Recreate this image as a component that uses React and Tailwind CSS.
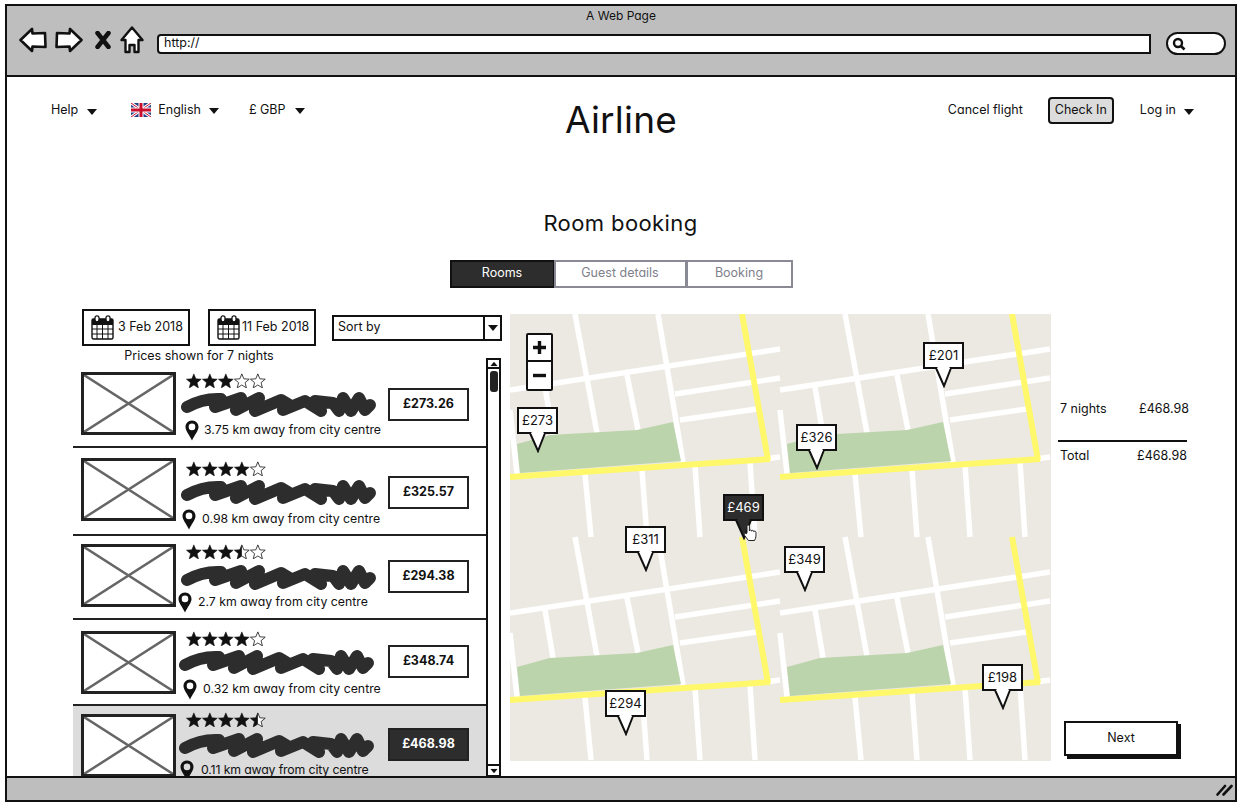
import React from "react";

const Caret = ({ c = "" }) => (
  <svg width="10" height="6" viewBox="0 0 10 6" className={c}><path d="M0 0 L10 0 L5 6 Z" fill="#111" /></svg>
);

const Flag = () => (
  <svg width="20" height="14" viewBox="0 0 20 14" className="block">
    <rect width="20" height="14" fill="#27408b" />
    <path d="M0 0 L20 14 M20 0 L0 14" stroke="#fff" strokeWidth="3" />
    <path d="M0 0 L20 14 M20 0 L0 14" stroke="#c8102e" strokeWidth="1" />
    <path d="M10 0 V14 M0 7 H20" stroke="#fff" strokeWidth="5" />
    <path d="M10 0 V14 M0 7 H20" stroke="#c8102e" strokeWidth="3" />
  </svg>
);

const Back = ({ flip }) => (
  <svg width="28" height="26" viewBox="0 0 28 26" className={flip ? "block -scale-x-100" : "block"}>
    <path d="M1.5 13 L13 2 L13.5 6.5 L26 6 L26.5 20 L13.5 19.5 L13 24 Z" fill="#fff" stroke="#111" strokeWidth="2.6" strokeLinejoin="round" />
  </svg>
);

const Home = () => (
  <svg width="24" height="28" viewBox="0 0 24 28" className="block">
    <path d="M12 1.5 L22.5 14 L18.5 14 L18.5 26 L14.5 26 L14.5 19 L9.5 19 L9.5 26 L5.5 26 L5.5 14 L1.5 14 Z" fill="#fff" stroke="#111" strokeWidth="2.4" strokeLinejoin="round" />
  </svg>
);

const Calendar = () => (
  <svg width="23" height="25" viewBox="0 0 23 25" className="block shrink-0">
    <rect x="1" y="4" width="21" height="20" rx="1.5" fill="#fff" stroke="#111" strokeWidth="1.4" />
    <rect x="1" y="4" width="21" height="6" fill="#111" />
    <path d="M1 14 H22 M1 19 H22 M6 10 V24 M11.5 10 V24 M17 10 V24" stroke="#111" strokeWidth="1" />
    <rect x="4" y="0.8" width="4" height="6" rx="2" fill="#fff" stroke="#111" strokeWidth="1.3" />
    <rect x="15" y="0.8" width="4" height="6" rx="2" fill="#fff" stroke="#111" strokeWidth="1.3" />
  </svg>
);

const StarPath = "M7 0.8 L8.8 5.2 L13.6 5.5 L9.9 8.6 L11.1 13.3 L7 10.7 L2.9 13.3 L4.1 8.6 L0.4 5.5 L5.2 5.2 Z";
const Stars = ({ full, half }) => (
  <svg width="82" height="15" viewBox="0 0 82 15" className="block">
    {[0, 1, 2, 3, 4].map((i) => (
      <g key={i} transform={`translate(${i * 16},0) scale(1.12)`}>
        <path d={StarPath} fill={i < full ? "#111" : "#fff"} stroke="#111" strokeWidth={i < full ? 0.5 : 0.7} strokeLinejoin="round" />
        {half && i === full ? <path d="M7 0.8 L5.2 5.2 L0.4 5.5 L4.1 8.6 L2.9 13.3 L7 10.7 Z" fill="#111" /> : null}
      </g>
    ))}
  </svg>
);

const Scribble = () => (
  <svg width="196" height="26" viewBox="0 0 196 26" className="block">
    <path
      d="M6 16 Q22 7 40 8 L34 16 L60 7 L55 19 L78 7 L74 20 L100 9 L110 15 L102 19 L124 10 L140 20 L134 10 L152 12 L158 20 L162 7 L170 20 L178 7 L184 19 L189 14"
      fill="none" stroke="#2d2d2d" strokeWidth="12" strokeLinecap="round" strokeLinejoin="round"
    />
  </svg>
);

const MapPin = () => (
  <svg width="14" height="21" viewBox="0 0 14 21" className="block shrink-0">
    <path d="M7 0.5 C3 0.5 0.5 3.5 0.5 7 C0.5 11 4.5 15 7 20.5 C9.5 15 13.5 11 13.5 7 C13.5 3.5 11 0.5 7 0.5 Z M7 3.6 A3.3 3.3 0 1 1 7 10.2 A3.3 3.3 0 1 1 7 3.6 Z" fill="#111" fillRule="evenodd" />
  </svg>
);

const rows = [
  { price: "£273.26", dist: "3.75 km away from city centre", full: 3, half: false, row: "h-[82px]", img: "mt-[6px]", mid: "ml-[5px] pt-[7px]", star: "ml-[5px]", sc: "mt-[3px]", line: "mt-[3px] ml-[4px] gap-[5px]", box: "mt-[22px] ml-[10px]" },
  { price: "£325.57", dist: "0.98 km away from city centre", full: 4, half: false, row: "h-[88px]", img: "mt-[10px]", mid: "ml-[5px] pt-[13px]", star: "ml-[5px]", sc: "mt-[3px]", line: "mt-[4px] ml-[1px] gap-[6px]", box: "mt-[28px] ml-[10px]" },
  { price: "£294.38", dist: "2.7 km away from city centre", full: 3, half: true, row: "h-[84px]", img: "mt-[8px]", mid: "ml-[5px] pt-[8px]", star: "ml-[5px]", sc: "mt-[5px]", line: "mt-[2px] -ml-[3px] gap-[6px]", box: "mt-[24px] ml-[10px]" },
  { price: "£348.74", dist: "0.32 km away from city centre", full: 4, half: false, row: "h-[86px]", img: "mt-[11px]", mid: "ml-[3px] pt-[11px]", star: "ml-[7px]", sc: "mt-[3px]", line: "mt-[4px] ml-[4px] gap-[6px]", box: "mt-[25px] ml-[12px]" },
  { price: "£468.98", dist: "0.11 km away from city centre", full: 4, half: true, row: "h-[80px] bg-[#dcdcdc]", img: "mt-[8px]", mid: "ml-[3px] pt-[6px]", star: "ml-[7px]", sc: "mt-[5px]", line: "mt-[2px] ml-[1px] gap-[7px] tracking-[-0.15px]", box: "mt-[22px] ml-[12px] bg-[#2d2d2d] text-white" },
];

const Tile = ({ x, y }) => (
  <g transform={`translate(${x},${y})`}>
    <g stroke="#fff" strokeWidth="5.5" fill="none">
      <path d="M65 0 L87 119" />
      <path d="M148 0 L173 148" />
      <path d="M0 76 L270 35" />
      <path d="M165 80 L270 64" />
      <path d="M170 106 L247 95" />
      <path d="M117 61 L128 116" />
      <path d="M35 73 L43 121" />
      <path d="M0 96 L7 160" />
      <path d="M75 160 L81 223" />
      <path d="M132 156 L137 223" />
      <path d="M185 151 L190 223" />
      <path d="M240 148 L245 223" />
      <path d="M255 145 L270 143" />
    </g>
    <path d="M7 130 L40 121 L127 116 L163 108 L171 147 L10 159 Z" fill="#bcd4ab" />
    <path d="M0 163 L260 145 M232 0 L258 146" stroke="#fff86a" strokeWidth="6" fill="none" />
  </g>
);

const pins = [
  { t: "£273", c: "left-[7px] top-[93px]" },
  { t: "£201", c: "left-[413px] top-[28px]" },
  { t: "£326", c: "left-[286px] top-[110px]" },
  { t: "£311", c: "left-[115px] top-[212px]" },
  { t: "£349", c: "left-[274px] top-[232px]" },
  { t: "£294", c: "left-[95px] top-[376px]" },
  { t: "£198", c: "left-[472px] top-[350px]" },
];

const PricePin = ({ t, c, dark }) => (
  <div className={`absolute w-[41px] ${c}`}>
    <div className={`h-[27px] flex items-center justify-center border-2 border-[#111] text-[13px] ${dark ? "bg-[#2d2d2d] text-white" : "bg-white text-[#111]"}`}>{t}</div>
    <svg width="41" height="21" viewBox="0 0 41 21" className="block -mt-[2px]">
      <path d="M13 1 L21 19 L28 1" fill={dark ? "#2d2d2d" : "#fff"} stroke="#111" strokeWidth="2" />
      <path d="M14.5 0 H26.5 V2 H14.5 Z" fill={dark ? "#2d2d2d" : "#fff"} />
    </svg>
  </div>
);

export default function App() {
  return (
    <div className="w-[1242px] h-[809px] bg-white overflow-hidden pt-[4px] pl-[5px] text-[12.5px] text-[#111] [font-family:Inter,'Liberation_Sans',sans-serif] [font-feature-settings:'cv11']">
      <div className="w-[1232px] h-[798px] border-2 border-[#111] flex flex-col">
        <div className="h-[71px] shrink-0 bg-[#bebebe] border-b-2 border-[#111]">
          <div className="h-[20px] flex items-center justify-center text-[12px]">A Web Page</div>
          <div className="flex items-center h-[28px] pl-[12px]">
            <Back />
            <div className="ml-[8px]"><Back flip /></div>
            <svg width="16" height="18" viewBox="0 0 16 18" className="ml-[12px] block">
              <path d="M2.5 2 L13.5 16 M13.5 2 L2.5 16" stroke="#111" strokeWidth="4.5" strokeLinecap="round" />
            </svg>
            <div className="ml-[9px]"><Home /></div>
            <div className="ml-[13px] mt-[7px] w-[994px] h-[20px] bg-white border-2 border-[#111] rounded-l-[4px] flex items-center pl-[5px] text-[12.5px] leading-none">http://</div>
            <div className="ml-[15px] mt-[7px] w-[60px] h-[23px] bg-white border-2 border-[#111] rounded-full flex items-center pl-[4px]">
              <svg width="14" height="14" viewBox="0 0 14 14" className="block">
                <circle cx="6" cy="6" r="4" fill="#fff" stroke="#111" strokeWidth="2.4" />
                <path d="M9 9 L12.5 12.5" stroke="#111" strokeWidth="2.6" />
              </svg>
            </div>
          </div>
        </div>

        <main className="h-[699px] shrink-0 overflow-hidden">
          <header className="grid grid-cols-[1fr_auto_1fr] h-[130px]">
            <div className="flex items-start pt-[23px] pl-[44px]">
              <div className="flex items-center h-[20px]">Help<Caret c="ml-[9px] mt-[3px]" /></div>
              <div className="flex items-center h-[20px] ml-[34px]"><Flag /><span className="ml-[7px]">English</span><Caret c="ml-[8px] mt-[1px]" /></div>
              <div className="flex items-center h-[20px] ml-[30px]">£ GBP<Caret c="ml-[9px] mt-[1px]" /></div>
            </div>
            <div className="text-[37px] leading-[46px] pt-[20px] font-normal tracking-[0.2px]">Airline</div>
            <div className="flex items-start justify-end pt-[20px] pr-[41px]">
              <div className="h-[27px] flex items-center">Cancel flight</div>
              <div className="ml-[25px] w-[66px] h-[27px] flex items-center justify-center bg-[#dcdcdc] border-2 border-[#111] rounded-[4px]">Check In</div>
              <div className="ml-[26px] h-[27px] flex items-center">Log in<Caret c="ml-[8px] mt-[2px]" /></div>
            </div>
          </header>

          <h1 className="text-center text-[22px] leading-[32px] font-normal tracking-[0.4px] -ml-[1px]">Room booking</h1>

          <div className="flex justify-center mt-[21px] h-[28px] text-[12.5px]">
            <div className="w-[105px] pb-[2px] flex items-center justify-center bg-[#2d2d2d] text-white border-2 border-[#111]">Rooms</div>
            <div className="w-[133px] pb-[2px] flex items-center justify-center bg-white text-[#80808a] border-2 border-[#8a8a94] -ml-[1px]">Guest details</div>
            <div className="w-[107px] pb-[2px] flex items-center justify-center bg-white text-[#80808a] border-2 border-[#8a8a94] -ml-[1px]">Booking</div>
          </div>

          <div className="flex pl-[66px] mt-[21px]">
            <div className="w-[429px] shrink-0">
              <div className="flex items-start h-[37px] pl-[9px]">
                <div className="w-[108px] h-[37px] border-2 border-[#111] flex items-center pl-[7px] gap-[4px]"><Calendar />3 Feb 2018</div>
                <div className="ml-[18px] w-[108px] h-[37px] border-2 border-[#111] flex items-center pl-[7px] gap-[2px]"><Calendar />11 Feb 2018</div>
                <div className="ml-[16px] mt-[6px] w-[170px] h-[26px] border-2 border-[#111] flex items-center">
                  <div className="flex-1 pl-[4px] pb-[1px]">Sort by</div>
                  <div className="w-[17px] h-full border-l-2 border-[#111] flex items-center justify-center"><Caret /></div>
                </div>
              </div>
              <div className="flex">
                <div className="w-[413px] shrink-0">
                  <div className="h-[20px] w-[252px] flex items-center justify-center">Prices shown for 7 nights</div>
                  {rows.map((r) => (
                    <div key={r.price} className={`flex pl-[8px] border-b-2 border-[#222] ${r.row}`}>
                      <div className={`w-[95px] h-[63px] shrink-0 bg-white border-[3px] border-[#222] ${r.img}`}>
                        <svg width="89" height="57" viewBox="0 0 89 57" className="block">
                          <path d="M0 0 L89 57 M89 0 L0 57" stroke="#666" strokeWidth="2.5" />
                        </svg>
                      </div>
                      <div className={`w-[197px] shrink-0 ${r.mid}`}>
                        <div className={r.star}><Stars full={r.full} half={r.half} /></div>
                        <div className={r.sc}><Scribble /></div>
                        <div className={`flex items-center h-[21px] text-[12.3px] whitespace-nowrap ${r.line}`}><MapPin /><span>{r.dist}</span></div>
                      </div>
                      <div className={`w-[81px] h-[33px] shrink-0 flex items-center justify-center border-2 border-[#222] font-bold text-[12.5px] ${r.box}`}>{r.price}</div>
                    </div>
                  ))}
                </div>
                <div className="w-[15px] shrink-0 mt-[12px] h-[419px] bg-white border-2 border-[#111] flex flex-col items-center">
                  <div className="h-[9px] w-full border-b-2 border-[#111] flex items-center justify-center"><Caret c="rotate-180 scale-75" /></div>
                  <div className="mt-[2px] w-[8px] h-[21px] bg-[#222] rounded-[3px]" />
                  <div className="mt-auto h-[11px] w-full border-t-2 border-[#111] flex items-center justify-center"><Caret c="scale-75" /></div>
                </div>
              </div>
            </div>

            <div className="relative ml-[8px] mt-[5px] w-[541px] h-[447px] shrink-0">
              <svg width="541" height="447" viewBox="0 0 541 447" className="block bg-[#ebe9e2]">
                <Tile x={0} y={0} />
                <Tile x={270} y={0} />
                <Tile x={0} y={223} />
                <Tile x={270} y={223} />
              </svg>
              <div className="absolute left-[16px] top-[19px] w-[27px] h-[58px] bg-white border-2 border-[#111] rounded-[2px] flex flex-col">
                <div className="h-[27px] border-b-2 border-[#111] flex items-center justify-center">
                  <svg width="15" height="15" viewBox="0 0 15 15"><path d="M7.5 1 V14 M1 7.5 H14" stroke="#111" strokeWidth="3.4" /></svg>
                </div>
                <div className="flex-1 flex items-center justify-center">
                  <svg width="15" height="15" viewBox="0 0 15 15"><path d="M1 7.5 H14" stroke="#111" strokeWidth="3.4" /></svg>
                </div>
              </div>
              {pins.map((p) => <PricePin key={p.t} t={p.t} c={p.c} />)}
              <PricePin t="£469" c="left-[213px] top-[180px]" dark />
              <svg width="15" height="18" viewBox="0 0 15 18" className="absolute left-[233px] top-[210px]">
                <path d="M4 8.5 V2.2 C4 0.6 6.4 0.6 6.4 2.2 V7 C6.4 5.6 8.6 5.6 8.6 7.2 C8.6 6 10.8 6 10.8 7.7 C10.8 6.8 13 6.8 13 8.4 V12 C13 14 12 15 11.5 16.5 H5.5 L1.6 11.4 C0.6 9.8 2.4 8.6 3.5 9.8 Z" fill="#fff" stroke="#222" strokeWidth="1" strokeLinejoin="round" />
              </svg>
            </div>

            <div className="ml-[9px] w-[129px] h-[448px] shrink-0 flex flex-col">
              <div className="mt-[91px] h-[18px] flex justify-between items-center"><span>7 nights</span><span>£468.98</span></div>
              <div className="mt-[22px] -ml-[2px] mr-[2px] border-t-2 border-[#111]" />
              <div className="mt-[5px] h-[18px] pr-[2px] flex justify-between items-center"><span>Total</span><span>£468.98</span></div>
              <div className="mt-auto ml-[4px] w-[114px] h-[35px] mb-[1px] flex items-center justify-center bg-white border-2 border-[#111] shadow-[3px_3px_0_#111]">Next</div>
            </div>
          </div>
        </main>

        <div className="flex-1 bg-[#bebebe] border-t-2 border-[#111] flex items-center justify-end pr-[2px]">
          <svg width="17" height="14" viewBox="0 0 17 14" className="block">
            <path d="M1.5 12.5 L9 4 M7.5 12.5 L15.5 4" stroke="#111" strokeWidth="2.6" strokeLinecap="round" />
          </svg>
        </div>
      </div>
    </div>
  );
}
